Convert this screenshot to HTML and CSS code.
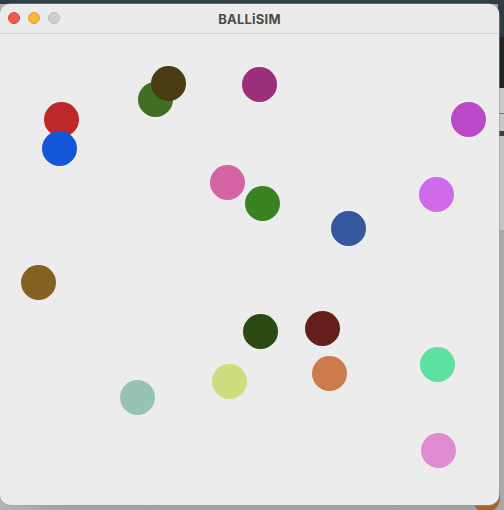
FILE: index.html
```html
<!DOCTYPE html>
<html>
<head>
<meta charset="utf-8">
<link rel="stylesheet" href="styles.css">
</head>
<body>
<div class="desktop">
  <div class="peek"></div>
  <div class="window">
    <div class="titlebar">
      <div class="lights">
        <span class="light red"></span>
        <span class="light yellow"></span>
        <span class="light gray"></span>
      </div>
      <div class="title">BALLiSIM</div>
    </div>
    <div class="canvas">
      <span class="ball" style="--x:61px;--y:119px;--c:#bf2828"></span>
      <span class="ball" style="--x:59px;--y:148px;--c:#1456d9"></span>
      <span class="ball" style="--x:155px;--y:99px;--c:#3f6e24"></span>
      <span class="ball" style="--x:168px;--y:83px;--c:#493b12"></span>
      <span class="ball" style="--x:259px;--y:84px;--c:#9b2f7b"></span>
      <span class="ball" style="--x:468px;--y:119px;--c:#bb48c8"></span>
      <span class="ball" style="--x:227px;--y:182px;--c:#d564a4"></span>
      <span class="ball" style="--x:262px;--y:203px;--c:#3a8221"></span>
      <span class="ball" style="--x:436px;--y:194px;--c:#cf6aea"></span>
      <span class="ball" style="--x:348px;--y:228px;--c:#34579e"></span>
      <span class="ball" style="--x:38px;--y:282px;--c:#866222"></span>
      <span class="ball" style="--x:260px;--y:331px;--c:#2b4912"></span>
      <span class="ball" style="--x:322px;--y:328px;--c:#641f1a"></span>
      <span class="ball" style="--x:437px;--y:364px;--c:#5ee0a1"></span>
      <span class="ball" style="--x:329px;--y:373px;--c:#cc7b4c"></span>
      <span class="ball" style="--x:229px;--y:381px;--c:#cddd7d"></span>
      <span class="ball" style="--x:137px;--y:397px;--c:#97c4b2"></span>
      <span class="ball" style="--x:438px;--y:450px;--c:#df8bd1"></span>
    </div>
  </div>
</div>
</body>
</html>
```

FILE: styles.css
```css
html, body {
  margin: 0;
  padding: 0;
}

body {
  width: 504px;
  height: 510px;
  overflow: hidden;
  font-family: "Inter", "Liberation Sans", sans-serif;
}

.desktop {
  position: relative;
  width: 504px;
  height: 510px;
  background:
    linear-gradient(to bottom, #2f3e45 0, #2f3e45 4px, transparent 4px),
    linear-gradient(to bottom,
      #2e3b40 0, #2e3b40 37px,
      #1f2323 37px, #1f2323 88px,
      #c9c9c9 88px, #c9c9c9 113px,
      #6e6e6e 113px, #6e6e6e 114px,
      #c6c6c6 114px, #c6c6c6 131px,
      #3a3f40 131px, #3a3f40 136px,
      #c4c4c4 136px, #c4c4c4 230px,
      #a9a9a9 230px, #a9a9a9 510px) right top / 6px 510px no-repeat,
    linear-gradient(to right, #b4b4b4 0, #a3a3a3 60px, #a0a0a0 100%);
}

.peek {
  position: absolute;
  left: 472px;
  top: 484px;
  width: 28px;
  height: 28px;
  border-radius: 50%;
  background: #a9622c;
}

.window {
  position: absolute;
  left: 0;
  top: 4px;
  width: 499px;
  height: 501px;
  background: #ececec;
  border-radius: 10px;
  overflow: hidden;
  box-shadow: 0 0 0 0.5px #9a9a9a;
  display: flex;
  flex-direction: column;
}

.titlebar {
  position: relative;
  height: 29px;
  flex: 0 0 29px;
  border-bottom: 1px solid #d2d2d2;
  background: #ebebeb;
  display: flex;
  align-items: center;
  justify-content: center;
}

.lights {
  position: absolute;
  left: 8px;
  top: 8px;
  display: flex;
  gap: 8px;
}

.light {
  width: 12px;
  height: 12px;
  border-radius: 50%;
  box-sizing: border-box;
}

.light.red {
  background: #ee5a52;
  border: 0.5px solid #d6443d;
}

.light.yellow {
  background: #f6b83a;
  border: 0.5px solid #dea132;
}

.light.gray {
  background: #cfcfcf;
  border: 0.5px solid #bdbdbd;
}

.title {
  font-size: 13px;
  font-weight: 700;
  color: #4b4b4b;
  letter-spacing: 0.2px;
}

.canvas {
  position: relative;
  flex: 1;
}

.ball {
  position: absolute;
  width: 35px;
  height: 35px;
  border-radius: 50%;
  left: calc(var(--x) - 17.5px);
  top: calc(var(--y) - 34px - 17.5px);
  background: var(--c);
}
```
